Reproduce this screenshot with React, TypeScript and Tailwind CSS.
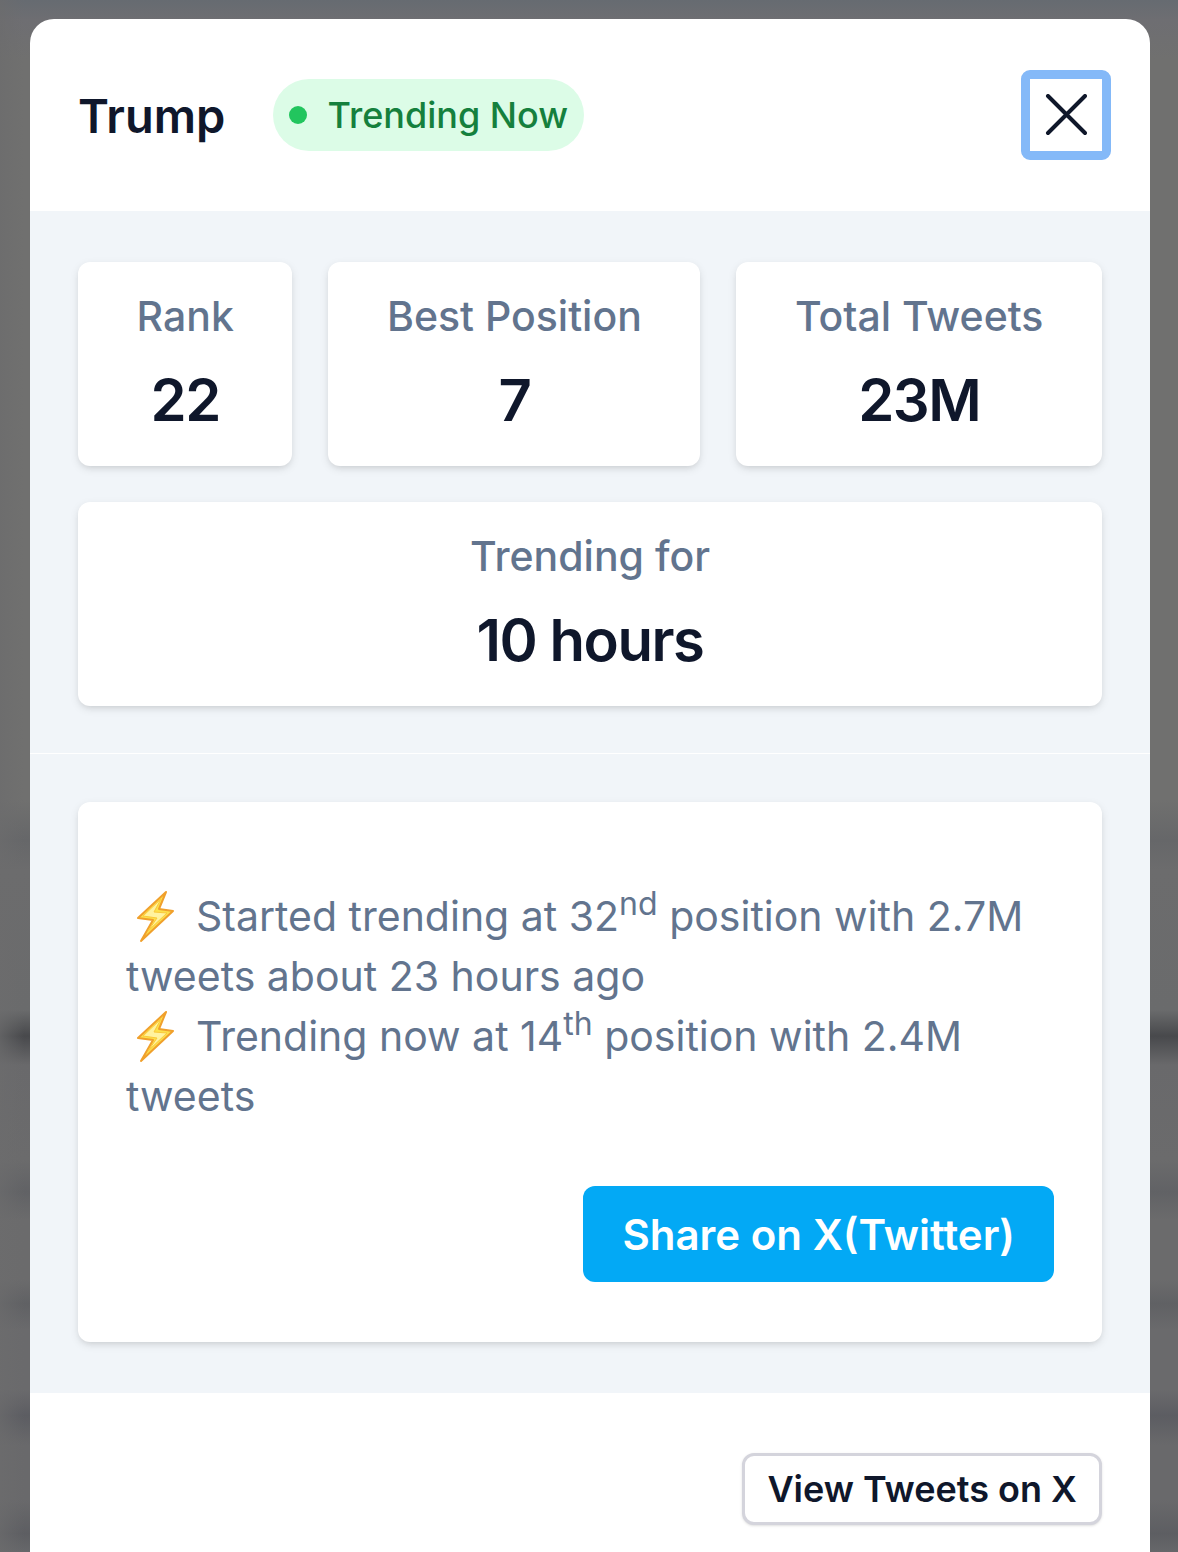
import { clsx } from "clsx"
import type { ReactNode } from "react"

const cardStyle = "rounded-xl bg-white shadow-[0_3px_9px_rgb(0_0_0/0.1),0_3px_6px_-3px_rgb(0_0_0/0.1)]"

// page content seen through the dimmed overlay, as soft horizontal bands
const backdrop =
  "bg-[linear-gradient(90deg,#6c6c6db3_0px,#6c6c6d00_24px),linear-gradient(#666b71_0px,#6e6e72_20px,#70706f_60px,#70706f_800px,#666769_840px,#6c6c6d_870px,#6a6b6c_1010px,#48494c_1036px,#69696b_1065px,#6b6b6c_1160px,#616265_1192px,#6b6b6c_1220px,#6b6b6c_1280px,#606164_1304px,#6a6a6c_1330px,#6a6a6c_1390px,#5c5d62_1416px,#69696b_1445px,#69696b_1500px,#5d5e62_1534px,#66676a_1552px)]"

function Stat({ label, wide, children }: { label: string; wide?: boolean; children: ReactNode }) {
  return (
    <div className={clsx("flex flex-col items-center pt-6 pb-7", cardStyle, wide ? "w-full" : "flex-auto px-14")}>
      <dt className="text-[41px] leading-[60px] font-medium text-slate-500">{label}</dt>
      <dd className="mt-4 text-[58px] leading-[76px] font-semibold tracking-tight text-slate-900">{children}</dd>
    </div>
  )
}

function Bolt() {
  return (
    <svg viewBox="0 0 42 54" className="mr-5 ml-2 inline-block h-[54px] w-[42px] align-[-13px]" aria-hidden="true">
      <path d="M32 2 4 28 19 30 7 51 39 21 25 19Z" fill="#fce14b" stroke="#f0a02c" strokeWidth="2" strokeLinejoin="round" />
      <path d="M27 9 9 26 23 28 14 41 33 23 20 22Z" fill="#fff3a0" stroke="#fbc93a" strokeWidth="1" strokeLinejoin="round" />
    </svg>
  )
}

function Sup({ children }: { children: ReactNode }) {
  return <sup className="text-[32px]">{children}</sup>
}

export default function App() {
  return (
    <div className={clsx("flex min-h-screen flex-col pt-[19px] pr-[28px] pl-[30px] font-[Inter,'Liberation_Sans',sans-serif]", backdrop)}>
      <div role="dialog" aria-labelledby="trend-title" className="flex flex-1 flex-col overflow-hidden rounded-t-3xl bg-white">
        <header className="flex h-48 items-center pr-[39px] pl-12">
          <h2 id="trend-title" className="pt-0.5 text-[47px] leading-[60px] font-semibold text-slate-900">Trump</h2>
          <span className="ml-12 flex h-[72px] items-center gap-5 rounded-full bg-[#dcfce7] px-4 text-[36px] font-medium text-[#15803d]">
            <span className="size-[18px] rounded-full bg-[#22c55e]" />
            Trending Now
          </span>
          <button type="button" aria-label="Close"
            className="ml-auto flex size-[90px] items-center justify-center rounded-[9px] border-[9px] border-[#84b9f8]">
            <svg viewBox="0 0 42 42" className="size-[42px]" fill="none" stroke="#0f172a" strokeWidth="4" strokeLinecap="round">
              <path d="M3 2 40 39M40 2 3 39" />
            </svg>
          </button>
        </header>

        <div className="bg-slate-100">
          <dl className="flex flex-wrap gap-9 px-12 pt-[51px] pb-[47px]">
            <Stat label="Rank">22</Stat>
            <Stat label="Best Position">7</Stat>
            <Stat label="Total Tweets">23M</Stat>
            <Stat label="Trending for" wide>10 hours</Stat>
          </dl>

          <section className="border-t border-white px-12 pt-12 pb-[51px]">
            <div className={clsx("flex flex-col px-12 pt-[84px] pb-[60px]", cardStyle)}>
              <div className="text-[41px] leading-[60px] text-slate-500">
                <p><Bolt />Started trending at 32<Sup>nd</Sup> position with 2.7M tweets about 23 hours ago</p>
                <p><Bolt />Trending now at 14<Sup>th</Sup> position with 2.4M tweets</p>
              </div>
              <button type="button" className="mt-[60px] h-24 self-end rounded-xl bg-[#03a9f5] px-[39px] text-[42px] font-semibold text-white">
                Share on X(Twitter)
              </button>
            </div>
          </section>
        </div>

        <footer className="flex justify-end px-12 pt-[60px] pb-[27px]">
          <a href="#tweets"
            className="flex h-[72px] items-center rounded-xl border-3 border-[#d4d4dc] bg-white px-[22px] text-[36px] font-semibold text-slate-900 shadow-sm">
            View Tweets on X
          </a>
        </footer>
      </div>
    </div>
  )
}
